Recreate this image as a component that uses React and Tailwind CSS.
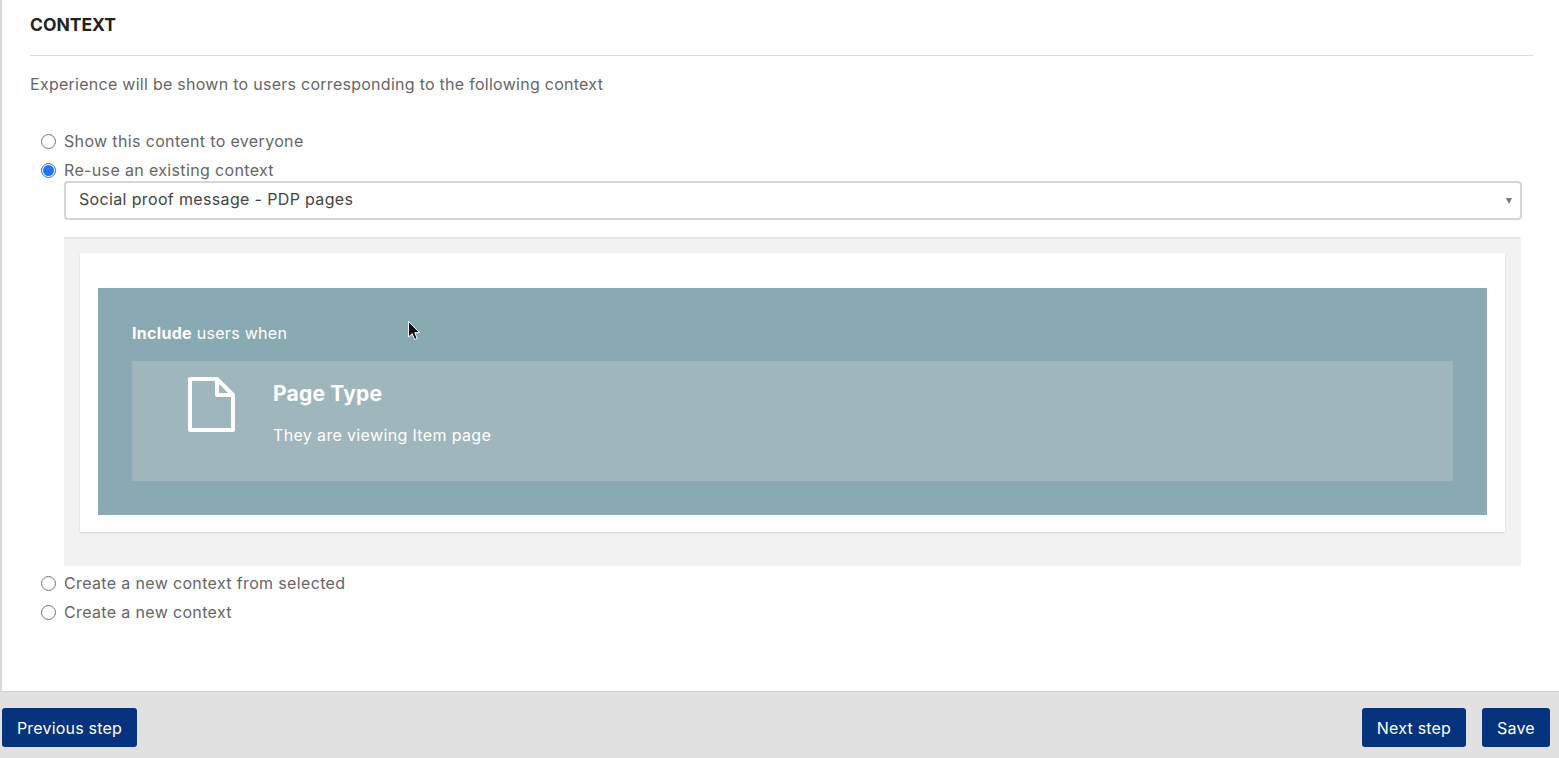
function Radio({ label, checked, className = "" }) {
  return (
    <label className={`flex h-[22px] items-center text-[16px] tracking-[0.35px] text-[#666666] ${className}`}>
      <span className="flex w-[23px] shrink-0 justify-start">
        {checked ? (
          <span className="flex h-[15px] w-[15px] items-center justify-center rounded-full border border-[#1a6fe0] bg-white">
            <span className="h-[11px] w-[11px] rounded-full bg-[#1f75ee]" />
          </span>
        ) : (
          <span className="h-[15px] w-[15px] rounded-full border-[1.5px] border-[#767676] bg-white" />
        )}
      </span>
      <span>{label}</span>
    </label>
  );
}

function Btn({ children, w }) {
  return (
    <button className={`flex h-[39px] items-center justify-center rounded-[3px] bg-[#06337d] text-[16px] tracking-[0.2px] text-white ${w}`}>
      {children}
    </button>
  );
}

export default function App() {
  return (
    <div className="relative flex h-[758px] w-[1559px] flex-col overflow-hidden bg-white font-['Inter','Open_Sans',sans-serif]">
      <main className="h-[691px] border-l-2 border-[#d8d8d8] pl-[28px] pr-[26px]">
        <h1 className="flex h-[56px] items-start border-b border-[#dedede] pt-[13px] text-[17.5px] font-bold leading-6 text-[#222222]">
          CONTEXT
        </h1>
        <p className="mt-[16px] text-[16px] leading-6 tracking-[0.27px] text-[#666666]">
          Experience will be shown to users corresponding to the following context
        </p>
        <div className="mt-[34px] pl-[11px]">
          <Radio label="Show this content to everyone" className="mb-[7px]" />
          <Radio label="Re-use an existing context" checked />
          <div className="ml-[23px] mr-[12px]">
            <div className="-mr-[0.5px] flex h-[39px] items-center justify-between rounded-[4px] border-2 border-[#d6d6d6] bg-white pl-[13px] pr-[8px] text-[16px] tracking-[0.35px] text-[#444444]">
              <span className="pb-[3px]">Social proof message - PDP pages</span>
              <span className="h-0 w-0 border-x-[3.5px] border-t-[6px] border-x-transparent border-t-[#777777]" />
            </div>
            <section className="mt-[17px] h-[329px] border-t-2 border-[#e8e8e8] bg-[#f2f2f2] px-[16px] pt-[14px]">
              <div className="h-[279px] bg-white px-[18px] pt-[35px] shadow-[0_1px_2px_rgba(0,0,0,0.12)]">
                <div className="h-[227px] bg-[#8aaab3] px-[34px] pt-[33px] text-white">
                  <p className="text-[16px] leading-6 tracking-[0.3px]">
                    <b className="font-bold">Include</b> users when
                  </p>
                  <div className="mt-[16px] flex h-[120px] bg-[#9fb7bc] pl-[56px] pt-[16px]">
                    <svg width="47" height="55" viewBox="0 0 47 55" fill="none" stroke="#ffffff" strokeWidth="4" strokeLinejoin="round" className="shrink-0">
                      <path d="M2 2H29L45 18V53H2Z" />
                      <path d="M29 2V18H45" />
                    </svg>
                    <div className="ml-[38px] pt-[2px]">
                      <h2 className="text-[21px] font-bold leading-[30px] tracking-[0.2px]">Page Type</h2>
                      <p className="mt-[14px] text-[16px] leading-6 tracking-[0.35px]">They are viewing Item page</p>
                    </div>
                  </div>
                </div>
              </div>
            </section>
          </div>
          <Radio label="Create a new context from selected" className="mt-[6px] mb-[7px]" />
          <Radio label="Create a new context" />
        </div>
      </main>
      <footer className="flex flex-1 items-start justify-between border-t border-[#d4d4d4] bg-[#e1e1e1] pl-[2px] pr-[9px] pt-[16px]">
        <Btn w="w-[135px]">Previous step</Btn>
        <div className="flex gap-[16px]">
          <Btn w="w-[104px]">Next step</Btn>
          <Btn w="w-[68px]">Save</Btn>
        </div>
      </footer>
      <svg className="absolute left-[407px] top-[320px]" width="14" height="22" viewBox="0 0 14 22">
        <path d="M1.5 1.5V17L5.2 13.6L7.6 19.5L10.2 18.4L7.8 12.7H12.6Z" fill="#111111" stroke="#ffffff" strokeWidth="1" />
      </svg>
    </div>
  );
}
